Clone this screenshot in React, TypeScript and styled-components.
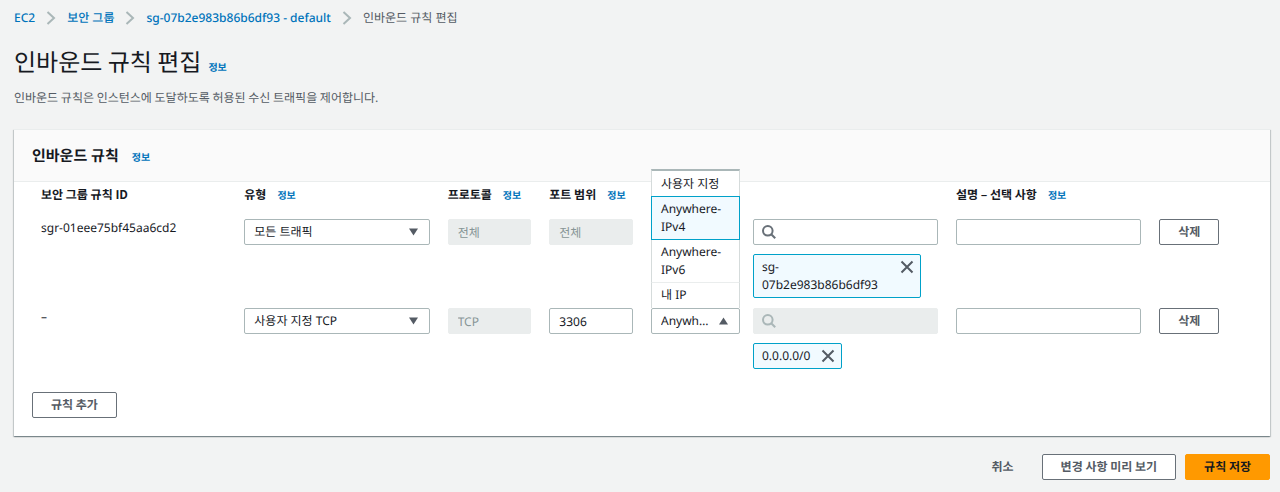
import React from "react";
import styled, { createGlobalStyle, css } from "styled-components";

const GlobalStyle = createGlobalStyle`
  *, *::before, *::after { box-sizing: border-box; }
  body {
    margin: 0;
    background: #f2f3f3;
    color: #16191f;
    font-family: "Noto Sans", "Noto Sans CJK KR", sans-serif;
    font-size: 12px;
    line-height: 18px;
    text-rendering: geometricPrecision;
  }
  button, input, select { font: inherit; color: inherit; margin: 0; text-rendering: inherit; }
`;

const koreanFont = `"Noto Sans CJK KR", "Noto Sans", sans-serif`;

const Page = styled.main`
  padding: 9px 10px 12px 14px;
`;

const Breadcrumbs = styled.ol`
  display: flex;
  align-items: center;
  gap: 11px;
  margin: 0;
  padding: 0;
  list-style: none;
  color: #545b64;
`;

const Crumb = styled.li`
  display: flex;
  align-items: center;
  gap: 11px;
`;

const CrumbLink = styled.a`
  color: #0073bb;
  font-weight: 500;
  text-decoration: none;
`;

const InfoLink = styled.a`
  color: #0073bb;
  font-size: 10px;
  font-weight: 700;
  text-decoration: none;
`;

const TitleRow = styled.div`
  display: flex;
  align-items: baseline;
  gap: 7px;
  margin-top: 16px;
`;

const Title = styled.h1`
  margin: 0;
  font-family: ${koreanFont};
  font-size: 24px;
  font-weight: 400;
  line-height: 36px;
`;

const Description = styled.p`
  margin: 10px 0 0;
  font-family: ${koreanFont};
  color: #545b64;
`;

const Panel = styled.section`
  margin-top: 22px;
  background: #fff;
  border-top: 1px solid #eaeded;
  box-shadow: 0 1px 1px 0 rgba(0, 28, 36, 0.3), 1px 1px 1px 0 rgba(0, 28, 36, 0.15),
    -1px 1px 1px 0 rgba(0, 28, 36, 0.15);
`;

const PanelHeader = styled.header`
  display: flex;
  align-items: baseline;
  gap: 13px;
  padding: 14px 18px 13px;
  background: #fafafa;
  border-bottom: 1px solid #eaeded;
`;

const PanelTitle = styled.h2`
  margin: 0;
  font-size: 15px;
  font-weight: 700;
  line-height: 24px;
`;

const PanelBody = styled.div`
  padding: 4px 18px 18px;
`;

const RulesTable = styled.table`
  width: 100%;
  table-layout: fixed;
  border-collapse: collapse;
`;

const Column = styled.col<{ $span: number }>`
  width: calc(100% * ${(p) => p.$span} / 12);
`;

const HeadCell = styled.th`
  height: 28px;
  padding: 0 9px;
  text-align: left;
  vertical-align: top;
  font-family: ${koreanFont};
  font-weight: 700;
  white-space: nowrap;
`;

const HeadLabel = styled.div`
  display: flex;
  align-items: baseline;
  gap: 11px;
`;

const Cell = styled.td`
  padding: 5px 9px;
  vertical-align: top;
`;

const control = css`
  display: block;
  width: 100%;
  height: 26px;
  padding: 0 9px;
  background: #fff;
  border: 1px solid #aab7b8;
  border-radius: 2px;
  outline: none;
  &:disabled {
    background: #eaeded;
    border-color: #eaeded;
    color: #879596;
    opacity: 1;
  }
`;

const TextInput = styled.input`
  ${control}
`;

const SelectBox = styled.div`
  position: relative;
`;

const NativeSelect = styled.select`
  ${control}
  appearance: none;
  padding-right: 26px;
  overflow: hidden;
  text-overflow: ellipsis;
  white-space: nowrap;
`;

const Caret = styled.svg`
  position: absolute;
  top: 9px;
  right: 12px;
  fill: #545b64;
  pointer-events: none;
`;

const Menu = styled.ul`
  position: absolute;
  right: 0;
  bottom: 100%;
  left: 0;
  z-index: 1;
  margin: 0;
  padding: 0;
  list-style: none;
  background: #fff;
  border: 1px solid #d5dbdb;
  border-top: 2px solid #aab7b8;
  border-bottom: 0;
`;

const MenuItem = styled.li<{ $selected?: boolean }>`
  margin: 0 -1px;
  padding: 3px 9px;
  border: 1px solid transparent;
  border-bottom-color: #eaeded;
  & + & { margin-top: -1px; }
  &:last-child { border-bottom-color: transparent; }
  ${(p) => p.$selected && css`
    position: relative;
    background: #f1faff;
    &, &:last-child { border-color: #00a1c9; }
  `}
`;

const SourceLayout = styled.div`
  display: grid;
  grid-template-columns: 89px minmax(0, 1fr);
  gap: 13px;
`;

const SourceValues = styled.div`
  display: flex;
  flex-direction: column;
  align-items: flex-start;
  gap: 9px;
`;

const SearchBox = styled.div`
  position: relative;
  width: 100%;
`;

const SearchInput = styled.input`
  ${control}
  padding-left: 30px;
`;

const SearchGlyph = styled.svg<{ $muted?: boolean }>`
  position: absolute;
  top: 6px;
  left: 9px;
  fill: none;
  stroke: ${(p) => (p.$muted ? "#aab7b8" : "#687078")};
  stroke-width: 2;
`;

const Token = styled.div`
  display: flex;
  align-items: flex-start;
  gap: 11px;
  max-width: 168px;
  padding: 3px 6px 3px 8px;
  background: #f1faff;
  border: 1px solid #00a1c9;
  border-radius: 2px;
`;

const TokenLabel = styled.span`
  flex: 1;
`;

const TokenRemove = styled.button`
  display: flex;
  padding: 2px 0;
  background: none;
  border: 0;
  cursor: pointer;
  svg { stroke: #545b64; stroke-width: 2; }
`;

const Button = styled.button<{ $variant?: "primary" | "link" }>`
  height: 26px;
  padding: 0 18px;
  background: #fff;
  border: 1px solid #687078;
  border-radius: 2px;
  color: #545b64;
  font-family: ${koreanFont};
  font-weight: 700;
  white-space: nowrap;
  cursor: pointer;
  ${(p) => p.$variant === "primary" && css`
    background: #ff9900;
    border-color: #ff9900;
    color: #16191f;
  `}
  ${(p) => p.$variant === "link" && css`
    background: transparent;
    border-color: transparent;
  `}
`;

const AddRow = styled.div`
  display: flex;
  margin-top: 18px;
`;

const Actions = styled.footer`
  display: flex;
  justify-content: flex-end;
  gap: 9px;
  margin-top: 18px;
`;

const Info = () => <InfoLink href="#info">정보</InfoLink>;

const Chevron = () => (
  <svg width="10" height="14" viewBox="0 0 10 14" fill="none" stroke="#aab7b8" strokeWidth="2" aria-hidden="true">
    <path d="M1.5 1 8 7 1.5 13" />
  </svg>
);

function Select({ label, value, menu }: { label: string; value: string; menu?: string[] }) {
  return (
    <SelectBox>
      <NativeSelect aria-label={label} defaultValue={value}>
        {(menu ?? [value]).map((option) => (
          <option key={option}>{option}</option>
        ))}
      </NativeSelect>
      <Caret width="9" height="8" viewBox="0 0 10 8" aria-hidden="true">
        <path d={menu ? "M5 0 10 8H0Z" : "M0 0H10L5 8Z"} />
      </Caret>
      {menu && (
        <Menu role="listbox" aria-label={label}>
          {menu.map((option) => (
            <MenuItem key={option} role="option" aria-selected={option === value} $selected={option === value}>
              {option}
            </MenuItem>
          ))}
        </Menu>
      )}
    </SelectBox>
  );
}

function Search({ disabled }: { disabled?: boolean }) {
  return (
    <SearchBox>
      <SearchInput type="text" aria-label="소스 검색" disabled={disabled} />
      <SearchGlyph $muted={disabled} width="14" height="14" viewBox="0 0 14 14" aria-hidden="true">
        <circle cx="5.8" cy="5.8" r="4.8" />
        <path d="M9.2 9.2 13.2 13.2" />
      </SearchGlyph>
    </SearchBox>
  );
}

function SourceToken({ children }: { children: string }) {
  return (
    <Token>
      <TokenLabel>{children}</TokenLabel>
      <TokenRemove aria-label={`${children} 제거`}>
        <svg width="14" height="14" viewBox="0 0 14 14" aria-hidden="true">
          <path d="M1.5 1.5 12.5 12.5M12.5 1.5 1.5 12.5" />
        </svg>
      </TokenRemove>
    </Token>
  );
}

const columns = [
  { label: "보안 그룹 규칙 ID", span: 2 },
  { label: "유형", span: 2, info: true },
  { label: "프로토콜", span: 1, info: true },
  { label: "포트 범위", span: 1, info: true },
  { label: "", span: 3 },
  { label: "설명 – 선택 사항", span: 2, info: true },
  { label: "", span: 1 },
];

interface Rule {
  id: string;
  type: string;
  protocol: string;
  port: string;
  portLocked?: boolean;
  source: string;
  fixedSource?: boolean;
}

const rules: Rule[] = [
  {
    id: "sgr-01eee75bf45aa6cd2",
    type: "모든 트래픽",
    protocol: "전체",
    port: "전체",
    portLocked: true,
    source: "sg-07b2e983b86b6df93",
  },
  {
    id: "–",
    type: "사용자 지정 TCP",
    protocol: "TCP",
    port: "3306",
    source: "0.0.0.0/0",
    fixedSource: true,
  },
];

const sourceOptions = ["사용자 지정", "Anywhere-IPv4", "Anywhere-IPv6", "내 IP"];

export default function App() {
  return (
    <>
      <GlobalStyle />
      <Page>
        <nav aria-label="탐색 경로">
          <Breadcrumbs>
            {["EC2", "보안 그룹", "sg-07b2e983b86b6df93 - default"].map((name) => (
              <Crumb key={name}>
                <CrumbLink href="#">{name}</CrumbLink>
                <Chevron />
              </Crumb>
            ))}
            <Crumb aria-current="page">인바운드 규칙 편집</Crumb>
          </Breadcrumbs>
        </nav>
        <TitleRow>
          <Title>인바운드 규칙 편집</Title>
          <Info />
        </TitleRow>
        <Description>인바운드 규칙은 인스턴스에 도달하도록 허용된 수신 트래픽을 제어합니다.</Description>

        <Panel>
          <PanelHeader>
            <PanelTitle>인바운드 규칙</PanelTitle>
            <Info />
          </PanelHeader>
          <PanelBody>
            <RulesTable>
              <colgroup>
                {columns.map((column, i) => (
                  <Column key={i} $span={column.span} />
                ))}
              </colgroup>
              <thead>
                <tr>
                  {columns.map((column, i) => (
                    <HeadCell key={i} scope="col">
                      <HeadLabel>
                        {column.label}
                        {column.info && <Info />}
                      </HeadLabel>
                    </HeadCell>
                  ))}
                </tr>
              </thead>
              <tbody>
                {rules.map((rule) => (
                  <tr key={rule.id}>
                    <Cell>{rule.id}</Cell>
                    <Cell>
                      <Select label="유형" value={rule.type} />
                    </Cell>
                    <Cell>
                      <TextInput aria-label="프로토콜" defaultValue={rule.protocol} disabled />
                    </Cell>
                    <Cell>
                      <TextInput aria-label="포트 범위" defaultValue={rule.port} disabled={rule.portLocked} />
                    </Cell>
                    <Cell>
                      <SourceLayout>
                        {rule.fixedSource ? (
                          <Select label="소스" value="Anywhere-IPv4" menu={sourceOptions} />
                        ) : (
                          <Select label="소스" value="사용자 지정" />
                        )}
                        <SourceValues>
                          <Search disabled={rule.fixedSource} />
                          <SourceToken>{rule.source}</SourceToken>
                        </SourceValues>
                      </SourceLayout>
                    </Cell>
                    <Cell>
                      <TextInput aria-label="설명" />
                    </Cell>
                    <Cell>
                      <Button>삭제</Button>
                    </Cell>
                  </tr>
                ))}
              </tbody>
            </RulesTable>
            <AddRow>
              <Button>규칙 추가</Button>
            </AddRow>
          </PanelBody>
        </Panel>

        <Actions>
          <Button $variant="link">취소</Button>
          <Button>변경 사항 미리 보기</Button>
          <Button $variant="primary">규칙 저장</Button>
        </Actions>
      </Page>
    </>
  );
}
